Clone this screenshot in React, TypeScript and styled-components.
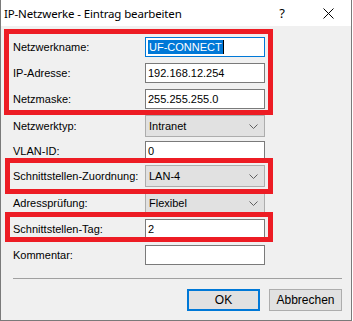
import styled, { createGlobalStyle } from "styled-components";

const GlobalStyle = createGlobalStyle`
  html, body {
    margin: 0;
    padding: 0;
    background: #ffffff;
  }
`;

const Window = styled.div`
  width: 352px;
  height: 321px;
  box-sizing: border-box;
  border: 1px solid #7a7a7a;
  border-top: none;
  background: #f0f0f0;
  display: flex;
  flex-direction: column;
  font-family: "Liberation Sans", Arial, sans-serif;
  font-size: 11px;
  color: #000;
`;

const TitleBar = styled.div`
  height: 26px;
  background: #ffffff;
  display: flex;
  align-items: center;
  padding-left: 3px;
`;

const Title = styled.div`
  flex: 1;
  font-family: "Noto Sans", "Liberation Sans", sans-serif;
  font-size: 11.5px;
  letter-spacing: -0.15px;
  color: #000;
`;

const TitleButton = styled.div`
  width: 46px;
  height: 26px;
  display: flex;
  align-items: center;
  justify-content: center;
  font-family: "Noto Sans", sans-serif;
  font-size: 13px;
`;

const Form = styled.div`
  display: flex;
  flex-direction: column;
  padding: 11px 0 0 12px;
`;

// red annotation frame drawn over a group of rows
const Highlight = styled.div<{ $inset: string; $top?: number }>`
  position: relative;
  align-self: flex-start;
  display: flex;
  flex-direction: column;
  margin-top: ${(p) => p.$top ?? 0}px;

  &::after {
    content: "";
    position: absolute;
    inset: ${(p) => p.$inset};
    border: 5px solid #ed1c24;
    pointer-events: none;
  }
`;

const Row = styled.div<{ $top?: number }>`
  display: flex;
  align-items: center;
  margin-top: ${(p) => p.$top ?? 0}px;
`;

const Label = styled.div`
  width: 132px;
  white-space: nowrap;
`;

const Input = styled.div<{ $focused?: boolean }>`
  width: 120px;
  height: 20px;
  box-sizing: border-box;
  background: #ffffff;
  border: 1px solid ${(p) => (p.$focused ? "#0078d7" : "#7a7a7a")};
  display: flex;
  align-items: center;
  padding-left: 2px;
  white-space: nowrap;
`;

const Selected = styled.span`
  background: #0078d7;
  color: #ffffff;
  line-height: 14px;
  padding: 0 1px;
`;

const Caret = styled.span`
  display: inline-block;
  width: 1px;
  height: 14px;
  background: #000;
`;

const Select = styled.div`
  width: 120px;
  height: 22px;
  box-sizing: border-box;
  background: #e1e1e1;
  border: 1px solid #adadad;
  display: flex;
  align-items: center;
  justify-content: space-between;
  padding: 0 6px 0 3px;
`;

const Separator = styled.div`
  margin: 13px 9px 0 0;
  border-top: 1px solid #a0a0a0;
`;

const Buttons = styled.div`
  display: flex;
  justify-content: flex-end;
  gap: 9px;
  margin-top: 10px;
  padding-right: 9px;
`;

const Button = styled.div<{ $default?: boolean }>`
  width: 73px;
  height: 22px;
  box-sizing: border-box;
  background: #e1e1e1;
  border: ${(p) => (p.$default ? "2px solid #0078d7" : "1px solid #adadad")};
  display: flex;
  align-items: center;
  justify-content: center;
  font-size: 12px;
`;

const Chevron = () => (
  <svg width="9" height="5" viewBox="0 0 9 5">
    <path d="M0.5 0.5 L4.5 4.5 L8.5 0.5" fill="none" stroke="#606060" strokeWidth="1" />
  </svg>
);

const CloseIcon = () => (
  <svg width="11" height="11" viewBox="0 0 11 11">
    <path d="M0.5 0.5 L10.5 10.5 M10.5 0.5 L0.5 10.5" stroke="#000" strokeWidth="1" />
  </svg>
);

export default function App() {
  return (
    <>
      <GlobalStyle />
      <Window>
        <TitleBar>
          <Title>IP-Netzwerke - Eintrag bearbeiten</Title>
          <TitleButton>?</TitleButton>
          <TitleButton>
            <CloseIcon />
          </TitleButton>
        </TitleBar>
        <Form>
          <Highlight $inset="-8px -8px -6px -9px">
            <Row>
              <Label>Netzwerkname:</Label>
              <Input $focused>
                <Selected>UF-CONNECT</Selected>
                <Caret />
              </Input>
            </Row>
            <Row $top={6}>
              <Label>IP-Adresse:</Label>
              <Input>192.168.12.254</Input>
            </Row>
            <Row $top={6}>
              <Label>Netzmaske:</Label>
              <Input>255.255.255.0</Input>
            </Row>
          </Highlight>
          <Row $top={6}>
            <Label>Netzwerktyp:</Label>
            <Select>
              Intranet
              <Chevron />
            </Select>
          </Row>
          <Row $top={4}>
            <Label>VLAN-ID:</Label>
            <Input>0</Input>
          </Row>
          <Highlight $top={4} $inset="-7px -8px -7px -8px">
            <Row>
              <Label>Schnittstellen-Zuordnung:</Label>
              <Select>
                LAN-4
                <Chevron />
              </Select>
            </Row>
          </Highlight>
          <Row $top={5}>
            <Label>Adressprüfung:</Label>
            <Select>
              Flexibel
              <Chevron />
            </Select>
          </Row>
          <Highlight $top={5} $inset="-7px -8px -3px -8px">
            <Row>
              <Label>Schnittstellen-Tag:</Label>
              <Input>2</Input>
            </Row>
          </Highlight>
          <Row $top={6}>
            <Label>Kommentar:</Label>
            <Input />
          </Row>
          <Separator />
          <Buttons>
            <Button $default>OK</Button>
            <Button>Abbrechen</Button>
          </Buttons>
        </Form>
      </Window>
    </>
  );
}
